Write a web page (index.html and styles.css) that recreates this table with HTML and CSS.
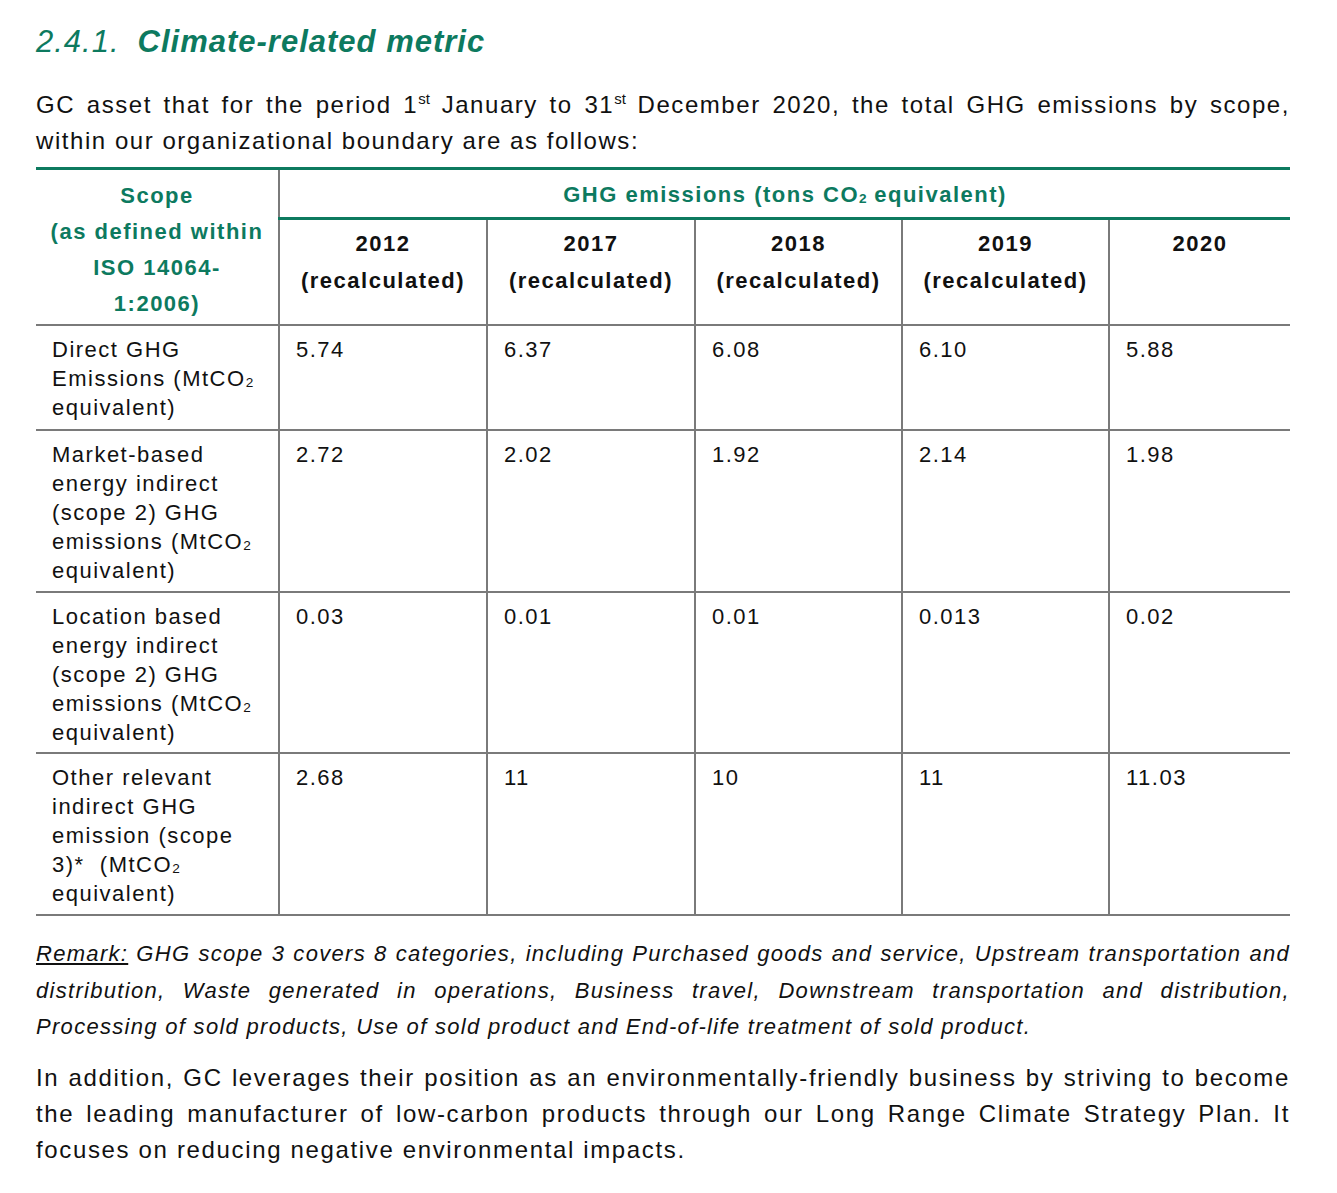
FILE: index.html
```html
<!DOCTYPE html>
<html>
<head>
<meta charset="utf-8">
<link rel="stylesheet" href="styles.css">
</head>
<body>
<div class="page">
  <h2 class="title"><span class="num">2.4.1.</span><span class="name">Climate-related metric</span></h2>
  <p class="intro">GC asset that for the period 1<sup>st</sup> January to 31<sup>st</sup> December 2020, the total GHG emissions by scope, within our organizational boundary are as follows:</p>
  <table class="ghg">
    <colgroup>
      <col class="c0"><col class="c1"><col class="c2"><col class="c3"><col class="c4"><col class="c5">
    </colgroup>
    <thead>
      <tr>
        <th rowspan="2" class="scope">Scope<br>(as defined within<br>ISO 14064-<br>1:2006)</th>
        <th colspan="5" class="group">GHG emissions (tons CO<sub>2</sub> equivalent)</th>
      </tr>
      <tr class="years">
        <th>2012<br>(recalculated)</th>
        <th>2017<br>(recalculated)</th>
        <th>2018<br>(recalculated)</th>
        <th>2019<br>(recalculated)</th>
        <th>2020</th>
      </tr>
    </thead>
    <tbody>
      <tr class="r1">
        <td>Direct GHG<br>Emissions (MtCO<sub>2</sub><br>equivalent)</td>
        <td>5.74</td><td>6.37</td><td>6.08</td><td>6.10</td><td>5.88</td>
      </tr>
      <tr class="r2">
        <td>Market-based<br>energy indirect<br>(scope 2) GHG<br>emissions (MtCO<sub>2</sub><br>equivalent)</td>
        <td>2.72</td><td>2.02</td><td>1.92</td><td>2.14</td><td>1.98</td>
      </tr>
      <tr class="r3">
        <td>Location based<br>energy indirect<br>(scope 2) GHG<br>emissions (MtCO<sub>2</sub><br>equivalent)</td>
        <td>0.03</td><td>0.01</td><td>0.01</td><td>0.013</td><td>0.02</td>
      </tr>
      <tr class="r4">
        <td>Other relevant<br>indirect GHG<br>emission (scope<br>3)*&nbsp; (MtCO<sub>2</sub><br>equivalent)</td>
        <td>2.68</td><td>11</td><td>10</td><td>11</td><td>11.03</td>
      </tr>
    </tbody>
  </table>
  <p class="remark"><u>Remark:</u> GHG scope 3 covers 8 categories, including Purchased goods and service, Upstream transportation and distribution, Waste generated in operations, Business travel, Downstream transportation and distribution, Processing of sold products, Use of sold product and End-of-life treatment of sold product.</p>
  <p class="closing">In addition, GC leverages their position as an environmentally-friendly business by striving to become the leading manufacturer of low-carbon products through our Long Range Climate Strategy Plan. It focuses on reducing negative environmental impacts.</p>
</div>
</body>
</html>
```

FILE: styles.css
```css
html, body {
  margin: 0;
  padding: 0;
  background: #ffffff;
}
.page {
  width: 1254px;
  padding: 24px 0 0 36px;
  font-family: "Liberation Sans", Arial, sans-serif;
  color: #111111;
}
.title {
  margin: 0;
  font-size: 31px;
  line-height: 36px;
  font-style: italic;
  color: #0d7a5f;
  font-weight: normal;
  letter-spacing: 1px;
}
.title .num {
  margin-right: 18px;
}
.title .name {
  font-weight: bold;
}
.intro {
  margin: 27px 0 0 0;
  font-size: 24px;
  line-height: 36px;
  text-align: justify;
  letter-spacing: 1.55px;
}
sup {
  font-size: 15px;
  line-height: 0;
  vertical-align: 9px;
  letter-spacing: 0;
}
sub {
  font-size: 0.62em;
  line-height: 0;
  vertical-align: -1px;
  letter-spacing: 0;
}
.ghg {
  margin-top: 8px;
  width: 1254px;
  border-collapse: collapse;
  table-layout: fixed;
  border-top: 3px solid #0d7a5f;
  border-bottom: 2px solid #7a7a7a;
  letter-spacing: 1.5px;
}
.c0 { width: 243px; }
.c1 { width: 208px; }
.c2 { width: 208px; }
.c3 { width: 207px; }
.c4 { width: 207px; }
.c5 { width: 181px; }
th {
  font-weight: bold;
  font-size: 22px;
  text-align: center;
  vertical-align: top;
}
th.scope {
  color: #0d7a5f;
  line-height: 36px;
  padding: 8px 0 2px 0;
  border-right: 2px solid #7a7a7a;
}
th.group {
  color: #0d7a5f;
  line-height: 36px;
  height: 50px;
  padding: 7px 0 0 0;
  box-sizing: border-box;
  border-bottom: 3px solid #0d7a5f;
}
.years th {
  color: #111111;
  line-height: 37px;
  padding: 5px 0 0 0;
  border-right: 2px solid #7a7a7a;
}
.years th:last-child {
  border-right: none;
}
thead {
  border-bottom: 2px solid #7a7a7a;
}
td {
  font-size: 22px;
  line-height: 29px;
  vertical-align: top;
  padding: 9px 0 0 16px;
  color: #111111;
  border-right: 2px solid #7a7a7a;
  border-bottom: 2px solid #7a7a7a;
}
td:last-child {
  border-right: none;
}
.r1 td { height: 94px; }
.r2 td { height: 151px; }
.r3 td { height: 150px; }
.r4 td { height: 151px; }
.remark {
  margin: 20px 0 0 0;
  font-size: 22px;
  line-height: 36.5px;
  font-style: italic;
  text-align: justify;
  letter-spacing: 1.3px;
}
.closing {
  margin: 14px 0 0 0;
  font-size: 24px;
  line-height: 36px;
  text-align: justify;
  letter-spacing: 1.65px;
}
```
